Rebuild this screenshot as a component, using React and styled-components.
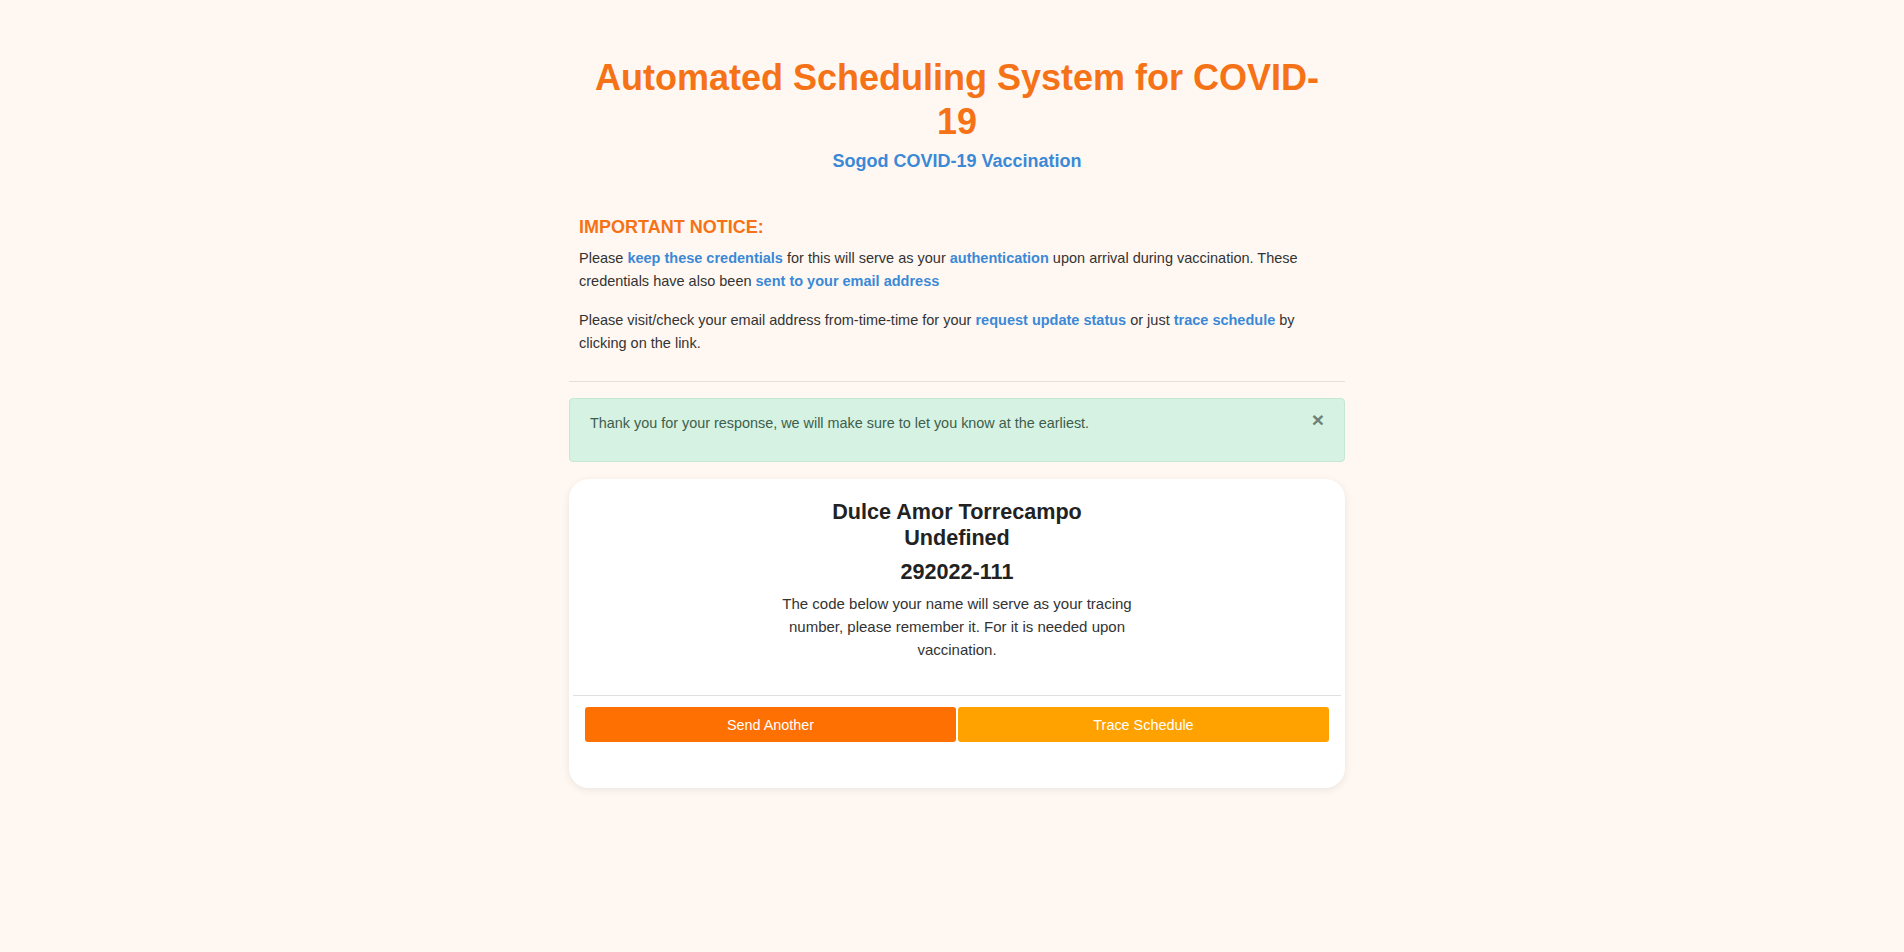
import styled, { createGlobalStyle } from "styled-components";

const GlobalStyle = createGlobalStyle`
  html, body {
    margin: 0;
    padding: 0;
    background: #fff8f2;
    font-family: "Liberation Sans", Arial, sans-serif;
  }
`;

const Page = styled.div`
  min-height: 100vh;
  padding: 56px 0 40px 10px;
  box-sizing: border-box;
`;

const Container = styled.div`
  width: 776px;
  margin: 0 auto;
  display: flex;
  flex-direction: column;
`;

const Header = styled.header`
  display: flex;
  flex-direction: column;
  align-items: center;
  text-align: center;
`;

const Title = styled.h1`
  max-width: 750px;
  margin: 0;
  font-size: 36px;
  line-height: 44px;
  font-weight: 700;
  color: #f57217;
`;

const Subtitle = styled.h2`
  margin: 6px 0 0;
  font-size: 18px;
  line-height: 22px;
  font-weight: 700;
  color: #3b89d6;
`;

const Notice = styled.section`
  padding: 0 10px;
  margin-top: 44px;
`;

const NoticeTitle = styled.h3`
  margin: 0;
  font-size: 18px;
  line-height: 22px;
  font-weight: 700;
  color: #f57217;
`;

const NoticeText = styled.p`
  margin: ${(p) => (p.$first ? "9px" : "16px")} 0 0;
  font-size: 14.5px;
  line-height: 23px;
  color: #333;
`;

const Strong = styled.strong`
  color: #3b89d6;
  font-weight: 700;
`;

const Rule = styled.hr`
  border: 0;
  border-top: 1px solid #e2dfdc;
  margin: ${(p) => p.$margin || "0"};
`;

const Alert = styled.div`
  position: relative;
  margin-top: 16px;
  padding: 12px 60px 26px 20px;
  background: #d5f2e3;
  border: 1px solid #c4e8d4;
  border-radius: 4px;
  color: #3d5e4c;
  font-size: 14.4px;
  line-height: 24px;
`;

const Close = styled.button`
  position: absolute;
  top: 9px;
  right: 20px;
  padding: 0;
  border: 0;
  background: none;
  font-family: "Liberation Sans", Arial, sans-serif;
  font-size: 21px;
  font-weight: 700;
  line-height: 24px;
  color: #6f8077;
  cursor: pointer;
`;

const Card = styled.div`
  margin-top: 17px;
  background: #fff;
  border-radius: 20px;
  box-shadow: 0 2px 8px rgba(0, 0, 0, 0.08);
  padding: 20px 4px 46px;
  display: flex;
  flex-direction: column;
`;

const CardBody = styled.div`
  display: flex;
  flex-direction: column;
  align-items: center;
  text-align: center;
  color: #222;
`;

const Name = styled.h3`
  margin: 0;
  font-size: 21.6px;
  line-height: 26px;
  font-weight: 700;
`;

const Code = styled.h3`
  margin: 8px 0 0;
  font-size: 21.6px;
  line-height: 26px;
  font-weight: 700;
`;

const CardText = styled.p`
  max-width: 380px;
  margin: 7px 0 0;
  font-size: 15px;
  line-height: 23px;
  color: #333;
`;

const Actions = styled.div`
  display: grid;
  grid-template-columns: 1fr 1fr;
  gap: 2px;
  padding: 0 12px;
`;

const Button = styled.button`
  height: 35px;
  border: 0;
  border-radius: 3px;
  background: ${(p) => p.$bg};
  color: #fff;
  font-family: "Liberation Sans", Arial, sans-serif;
  font-size: 14.4px;
  cursor: pointer;
`;

export default function App() {
  return (
    <>
      <GlobalStyle />
      <Page>
        <Container>
          <Header>
            <Title>Automated Scheduling System for COVID-19</Title>
            <Subtitle>Sogod COVID-19 Vaccination</Subtitle>
          </Header>

          <Notice>
            <NoticeTitle>IMPORTANT NOTICE:</NoticeTitle>
            <NoticeText $first>
              Please <Strong>keep these credentials</Strong> for this will serve as your{" "}
              <Strong>authentication</Strong> upon arrival during vaccination. These
              credentials have also been <Strong>sent to your email address</Strong>
            </NoticeText>
            <NoticeText>
              Please visit/check your email address from-time-time for your{" "}
              <Strong>request update status</Strong> or just <Strong>trace schedule</Strong> by
              clicking on the link.
            </NoticeText>
          </Notice>

          <Rule $margin="26px 0 0" />

          <Alert>
            Thank you for your response, we will make sure to let you know at the earliest.
            <Close aria-label="Close">×</Close>
          </Alert>

          <Card>
            <CardBody>
              <Name>
                Dulce Amor Torrecampo
                <br />
                Undefined
              </Name>
              <Code>292022-111</Code>
              <CardText>
                The code below your name will serve as your tracing number, please
                remember it. For it is needed upon vaccination.
              </CardText>
            </CardBody>
            <Rule $margin="34px 0 11px" />
            <Actions>
              <Button $bg="#ff7003">Send Another</Button>
              <Button $bg="#ffa200">Trace Schedule</Button>
            </Actions>
          </Card>
        </Container>
      </Page>
    </>
  );
}
